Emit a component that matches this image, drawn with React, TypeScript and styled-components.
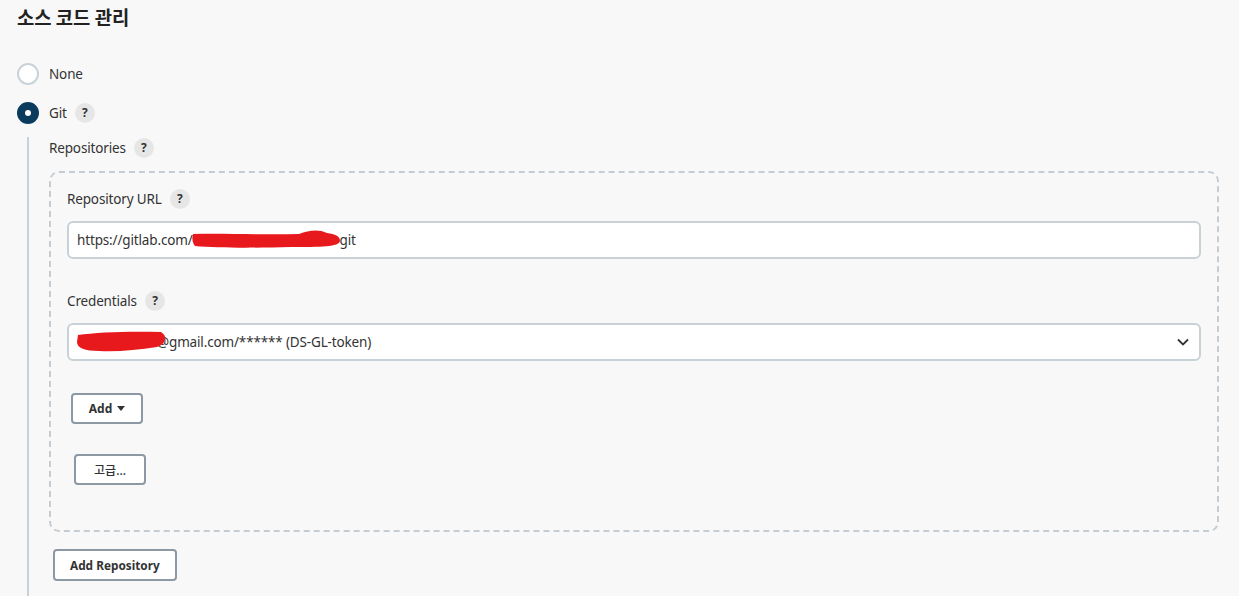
import * as React from "react";
import styled, { createGlobalStyle } from "styled-components";

const GlobalStyle = createGlobalStyle`
	html, body {
		margin: 0;
		padding: 0;
		background: #f8f8f8;
	}
	body {
		font-family: "Noto Sans", "Noto Sans CJK KR", sans-serif;
		color: #333;
	}
`;

const Page = styled.div`
	width: 1239px;
	height: 596px;
	overflow: hidden;
	padding: 6px 20px 0 17px;
	box-sizing: border-box;
`;

const Title = styled.h2`
	margin: 0;
	font-size: 18.8px;
	font-weight: 600;
	line-height: 22px;
	color: #222;
	font-family: "Noto Sans CJK KR", "Noto Sans", sans-serif;
`;

const RadioList = styled.div`
	margin-top: 35px;
	display: flex;
	flex-direction: column;
	gap: 17px;
`;

const RadioRow = styled.label`
	display: flex;
	align-items: center;
	gap: 10px;
	height: 22px;
`;

const RadioCircle = styled.span<{ $checked?: boolean }>`
	width: 22px;
	height: 22px;
	border-radius: 50%;
	box-sizing: border-box;
	display: flex;
	align-items: center;
	justify-content: center;
	background: ${(p) => (p.$checked ? "#0b3b5c" : "#fff")};
	border: 2px solid ${(p) => (p.$checked ? "#0b3b5c" : "#c8d2d8")};
	&::after {
		content: "";
		display: ${(p) => (p.$checked ? "block" : "none")};
		width: 6px;
		height: 6px;
		border-radius: 50%;
		background: #fff;
	}
`;

const Help = styled.span`
	width: 20px;
	height: 20px;
	border-radius: 50%;
	background: #e6e6e6;
	display: inline-flex;
	align-items: center;
	justify-content: center;
	font-size: 12px;
	font-weight: 700;
	color: #333;
`;

const Nested = styled.div`
	margin: 13px 0 0 10px;
	border-left: 2px solid #c9d1d6;
	padding: 1px 0 20px 20px;
`;

const Label = styled.div`
	display: flex;
	align-items: center;
	gap: 8px;
	font-size: 13.5px;
	letter-spacing: -0.15px;
	line-height: 20px;
	color: #333;
`;

const RepoBox = styled.div`
	margin-top: 13px;
	border: 2px dashed #c6cdd2;
	border-radius: 10px;
	padding: 16px 16px 45px 16px;
	display: flex;
	flex-direction: column;
`;

const Field = styled.div`
	display: flex;
	flex-direction: column;
	gap: 12px;
	& + & {
		margin-top: 32px;
	}
`;

const TextBox = styled.div`
	position: relative;
	height: 38px;
	box-sizing: border-box;
	background: #fff;
	border: 2px solid #c8d2d6;
	border-radius: 6px;
	display: flex;
	align-items: center;
	padding: 0 8px;
	font-size: 13.5px;
	letter-spacing: -0.15px;
	color: #333;
	white-space: nowrap;
`;

const Chevron = styled.svg`
	position: absolute;
	right: 10px;
	top: 50%;
	margin-top: -4px;
`;

const Redact = styled.span<{ $w: number }>`
	display: inline-block;
	position: relative;
	width: ${(p) => p.$w}px;
	height: 20px;
	svg {
		position: absolute;
		left: 0;
		top: 0;
		overflow: visible;
	}
`;

const Button = styled.button`
	font-family: "Noto Sans", "Noto Sans CJK KR", sans-serif;
	font-size: 12px;
	font-weight: 700;
	color: #333;
	background: #fff;
	border: 2px solid #8c99a4;
	border-radius: 4px;
	height: 31px;
	padding: 0 14px;
	display: inline-flex;
	align-items: center;
	gap: 5px;
	cursor: pointer;
`;

const AddButton = styled(Button)`
	margin: 32px 0 0 4px;
	width: 72px;
	justify-content: center;
	align-self: flex-start;
`;

const AdvancedButton = styled(Button)`
	margin: 30px 0 0 7px;
	width: 72px;
	justify-content: center;
	font-weight: 500;
	align-self: flex-start;
`;

const AddRepoButton = styled(Button)`
	margin: 17px 0 0 4px;
	height: 32px;
	padding: 0 15px;
	font-size: 11.8px;
`;

const Caret = () => (
	<svg width="8" height="5" viewBox="0 0 8 5">
		<path d="M0 0 L8 0 L4 5 Z" fill="#333" />
	</svg>
);

export default function App() {
	return (
		<>
			<GlobalStyle />
			<Page>
				<Title>소스 코드 관리</Title>
				<RadioList>
					<RadioRow>
						<RadioCircle />
						<Label>None</Label>
					</RadioRow>
					<RadioRow>
						<RadioCircle $checked />
						<Label>
							Git<Help>?</Help>
						</Label>
					</RadioRow>
				</RadioList>
				<Nested>
					<Label>
						Repositories<Help>?</Help>
					</Label>
					<RepoBox>
						<Field>
							<Label>
								Repository URL<Help>?</Help>
							</Label>
							<TextBox>
								https://gitlab.com/
								<Redact $w={147}>
									<svg width="147" height="20">
										<path
											d="M0 4 C30 3 70 5 106 4 C116 0 126 -1 134 3 C142 4 147 6 147 11 C146 17 128 17 98 17 C60 18 25 18 2 16 C-1 12 -1 8 0 4 Z"
											fill="#e8191c"
										/>
									</svg>
								</Redact>
								git
							</TextBox>
						</Field>
						<Field>
							<Label>
								Credentials<Help>?</Help>
							</Label>
							<TextBox>
								<Redact $w={80}>
									<svg width="80" height="20">
										<path
											d="M1 3 C20 0 55 -1 84 0 C91 4 89 12 80 15 C60 18 40 20 22 19 C8 19 0 16 0 10 Z"
											fill="#e8191c"
										/>
									</svg>
								</Redact>
								@gmail.com/****** (DS-GL-token)
								<Chevron width="12" height="8" viewBox="0 0 12 8">
									<path
										d="M1 1.5 L6 6.5 L11 1.5"
										fill="none"
										stroke="#333"
										strokeWidth="1.8"
									/>
								</Chevron>
							</TextBox>
						</Field>
						<AddButton>
							Add
							<Caret />
						</AddButton>
						<AdvancedButton>고급...</AdvancedButton>
					</RepoBox>
					<AddRepoButton>Add Repository</AddRepoButton>
				</Nested>
			</Page>
		</>
	);
}
